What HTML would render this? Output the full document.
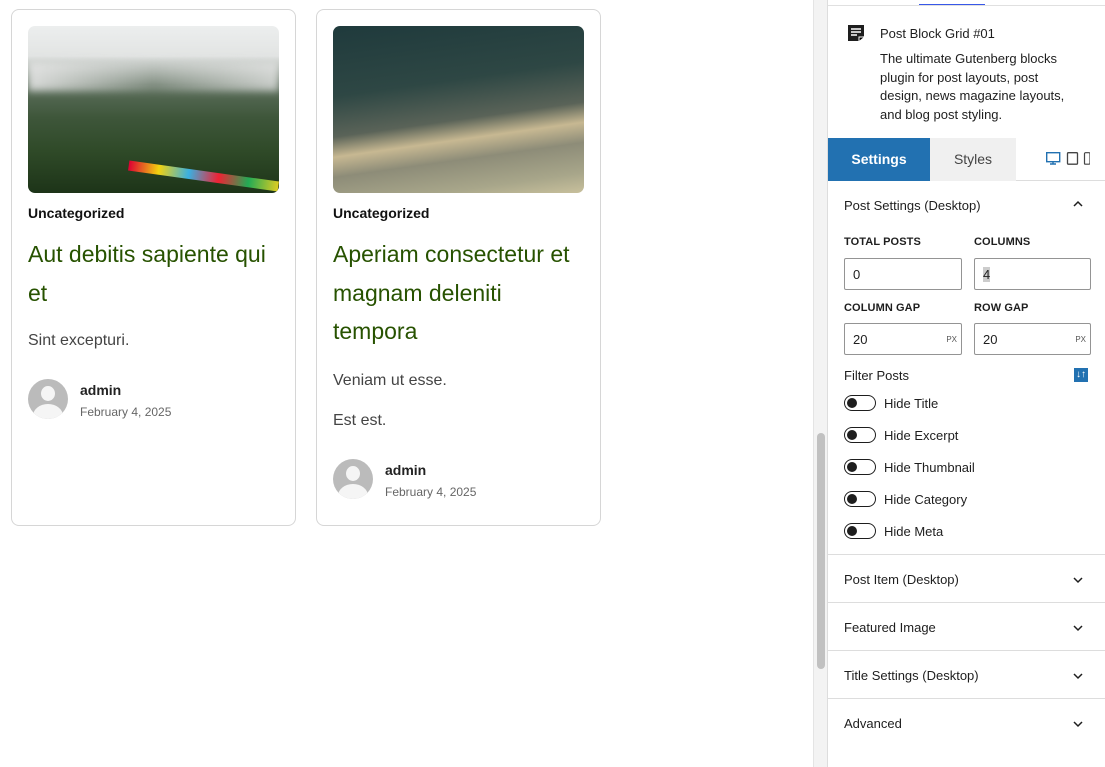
<!DOCTYPE html>
<html><head><meta charset="utf-8"><style>
*{box-sizing:border-box;margin:0;padding:0}
body{width:1105px;height:767px;overflow:hidden;background:#fff;font-family:"Liberation Sans",Arial,sans-serif;position:relative;color:#1e1e1e}
.card{position:absolute;top:9px;width:285px;height:517px;border:1px solid #d6d6d6;border-radius:8px;background:#fff}
.img{position:absolute;left:16px;top:16px;width:251px;height:167px;border-radius:7px;overflow:hidden}
.cat{position:absolute;left:16px;top:195px;font-size:14px;font-weight:bold;color:#111}
.title{position:absolute;left:16px;top:225px;width:255px;font-size:23px;line-height:38.5px;color:#275200}
.ex{position:absolute;left:16px;font-size:16px;color:#444}
.av{position:absolute;left:16px;width:40px;height:40px;border-radius:50%;background:#bbb;overflow:hidden}
.av:before{content:"";position:absolute;left:13px;top:7px;width:14px;height:15px;border-radius:50%;background:#f5f5f5}
.av:after{content:"";position:absolute;left:5px;top:25px;width:30px;height:24px;border-radius:50%;background:#f5f5f5}
.au{position:absolute;left:68px;font-size:14px;font-weight:bold;color:#222}
.dt{position:absolute;left:68px;font-size:12px;color:#666}
.sb{position:absolute;left:813px;top:0;width:15px;height:767px;background:#f3f3f3;border-left:1px solid #e4e4e4;border-right:1px solid #ddd}
.thumb{position:absolute;left:817px;top:433px;width:8px;height:236px;border-radius:4px;background:#c1c1c1}
.p{position:absolute;left:828px;top:0;width:277px;height:767px}
.t{position:absolute;font-size:13px}
.lbl{position:absolute;font-size:11px;font-weight:bold;color:#1e1e1e;letter-spacing:.1px}
.in{position:absolute;width:118px;height:32px;border:1px solid #949494;border-radius:2px;font-size:13px;padding:8px 8px}
.px{position:absolute;right:4px;top:11px;font-size:8px;color:#555}
.tg{position:absolute;left:16px;width:32px;height:16px;border:1px solid #1e1e1e;border-radius:8px}
.tg:before{content:"";position:absolute;left:2px;top:2px;width:10px;height:10px;border-radius:50%;background:#1e1e1e}
.tl{position:absolute;left:56px;font-size:13px}
.hr{position:absolute;left:0;width:277px;height:1px;background:#ddd}
.sec{position:absolute;left:16px;font-size:13px;font-weight:500}
.chev{position:absolute;left:245px;width:10px;height:10px}
</style></head><body>
<div class="card" style="left:11px">
 <div class="img" style="background:linear-gradient(180deg,#eceeee 0%,#e2e4e3 18%,#5d6f5d 35%,#3e563a 55%,#2f4a28 75%,#1d3418 100%)">
  <div style="position:absolute;left:0;top:35px;width:251px;height:30px;background:linear-gradient(90deg,rgba(230,230,230,.9),rgba(220,220,220,.3),rgba(230,230,230,.8));filter:blur(4px)"></div>
  <div style="position:absolute;left:100px;top:145px;width:151px;height:10px;background:linear-gradient(90deg,#d03,#f2d20f,#3ab0e0,#e23,#2a5,#dc2);transform:rotate(8deg)"></div>
 </div>
 <div class="cat">Uncategorized</div>
 <div class="title">Aut debitis sapiente qui et</div>
 <div class="ex" style="top:322px">Sint excepturi.</div>
 <div class="av" style="top:369px"></div>
 <div class="au" style="top:372px">admin</div>
 <div class="dt" style="top:395px">February 4, 2025</div>
</div>
<div class="card" style="left:316px">
 <div class="img" style="background:linear-gradient(172deg,#1f3a3c 0%,#2e4744 35%,#5a6358 55%,#c7b892 65%,#8d8c78 75%,#a8a68a 90%,#c8c09c 100%)"></div>
 <div class="cat">Uncategorized</div>
 <div class="title">Aperiam consectetur et magnam deleniti tempora</div>
 <div class="ex" style="top:362px">Veniam ut esse.</div>
 <div class="ex" style="top:402px">Est est.</div>
 <div class="av" style="top:449px"></div>
 <div class="au" style="top:452px">admin</div>
 <div class="dt" style="top:475px">February 4, 2025</div>
</div>
<div class="sb"></div><div class="thumb"></div>
<div class="p">
 <div style="position:absolute;left:91px;top:4px;width:66px;height:2px;background:#3858e9"></div>
 <div class="hr" style="top:5px;background:#e0e0e0"></div>
 <svg style="position:absolute;left:19px;top:24px" width="18" height="18" viewBox="0 0 18 18"><path d="M1 1h16v11l-5 5H1z" fill="#1e1e1e"/><path d="M4 5h10M4 8h10M4 11h6" stroke="#fff" stroke-width="1.4"/><path d="M12 17v-4h5" stroke="#fff" stroke-width="1"/></svg>
 <div class="t" style="left:52px;top:26px;font-weight:500">Post Block Grid #01</div>
 <div class="t" style="left:52px;top:50px;line-height:18.5px;width:198px">The ultimate Gutenberg blocks plugin for post layouts, post design, news magazine layouts, and blog post styling.</div>
 <div style="position:absolute;left:0;top:138px;width:102px;height:43px;background:#2271b1;color:#fff;font-size:14px;font-weight:bold;text-align:center;line-height:43px">Settings</div>
 <div style="position:absolute;left:102px;top:138px;width:86px;height:43px;background:#f0f0f0;color:#444;font-size:14px;text-align:center;line-height:43px">Styles</div>
 <div class="hr" style="top:180px;left:188px;width:89px"></div>
 <svg style="position:absolute;left:218px;top:152px" width="44" height="13" viewBox="0 0 44 13"><rect x="0.7" y="0.7" width="13" height="9" fill="none" stroke="#2271b1" stroke-width="1.4"/><path d="M4 12h6M7 10v2" stroke="#2271b1" stroke-width="1.4"/><rect x="21.5" y="0.7" width="10" height="11.5" rx="1" fill="none" stroke="#444" stroke-width="1.3"/><rect x="38.5" y="0.7" width="5.5" height="11.5" rx="1" fill="none" stroke="#444" stroke-width="1.2"/></svg>
 <div class="sec" style="top:198px">Post Settings (Desktop)</div>
 <svg class="chev" style="top:199px" viewBox="0 0 10 10"><path d="M1 7l4-4 4 4" fill="none" stroke="#1e1e1e" stroke-width="1.5"/></svg>
 <div class="lbl" style="left:16px;top:236px">TOTAL POSTS</div>
 <div class="lbl" style="left:146px;top:236px">COLUMNS</div>
 <div class="in" style="left:16px;top:258px">0</div>
 <div class="in" style="left:146px;top:258px;width:117px"><span style="background:#ccc">4</span></div>
 <div class="lbl" style="left:16px;top:302px">COLUMN GAP</div>
 <div class="lbl" style="left:146px;top:302px">ROW GAP</div>
 <div class="in" style="left:16px;top:323px">20<span class="px">PX</span></div>
 <div class="in" style="left:146px;top:323px;width:117px">20<span class="px">PX</span></div>
 <div class="t" style="left:16px;top:368px;font-weight:500">Filter Posts</div>
 <div style="position:absolute;left:246px;top:368px;width:14px;height:14px;background:#2271b1;color:#fff;font-size:10px;line-height:14px;text-align:center;font-weight:bold">↓↑</div>
 <div class="tg" style="top:395px"></div><div class="tl" style="top:396px">Hide Title</div>
 <div class="tg" style="top:427px"></div><div class="tl" style="top:428px">Hide Excerpt</div>
 <div class="tg" style="top:459px"></div><div class="tl" style="top:460px">Hide Thumbnail</div>
 <div class="tg" style="top:491px"></div><div class="tl" style="top:492px">Hide Category</div>
 <div class="tg" style="top:523px"></div><div class="tl" style="top:524px">Hide Meta</div>
 <div class="hr" style="top:554px"></div>
 <div class="sec" style="top:572px">Post Item (Desktop)</div>
 <svg class="chev" style="top:575px" viewBox="0 0 10 10"><path d="M1 3l4 4 4-4" fill="none" stroke="#1e1e1e" stroke-width="1.5"/></svg>
 <div class="hr" style="top:602px"></div>
 <div class="sec" style="top:620px">Featured Image</div>
 <svg class="chev" style="top:623px" viewBox="0 0 10 10"><path d="M1 3l4 4 4-4" fill="none" stroke="#1e1e1e" stroke-width="1.5"/></svg>
 <div class="hr" style="top:650px"></div>
 <div class="sec" style="top:668px">Title Settings (Desktop)</div>
 <svg class="chev" style="top:671px" viewBox="0 0 10 10"><path d="M1 3l4 4 4-4" fill="none" stroke="#1e1e1e" stroke-width="1.5"/></svg>
 <div class="hr" style="top:698px"></div>
 <div class="sec" style="top:716px">Advanced</div>
 <svg class="chev" style="top:719px" viewBox="0 0 10 10"><path d="M1 3l4 4 4-4" fill="none" stroke="#1e1e1e" stroke-width="1.5"/></svg>
</div>
</body></html>
